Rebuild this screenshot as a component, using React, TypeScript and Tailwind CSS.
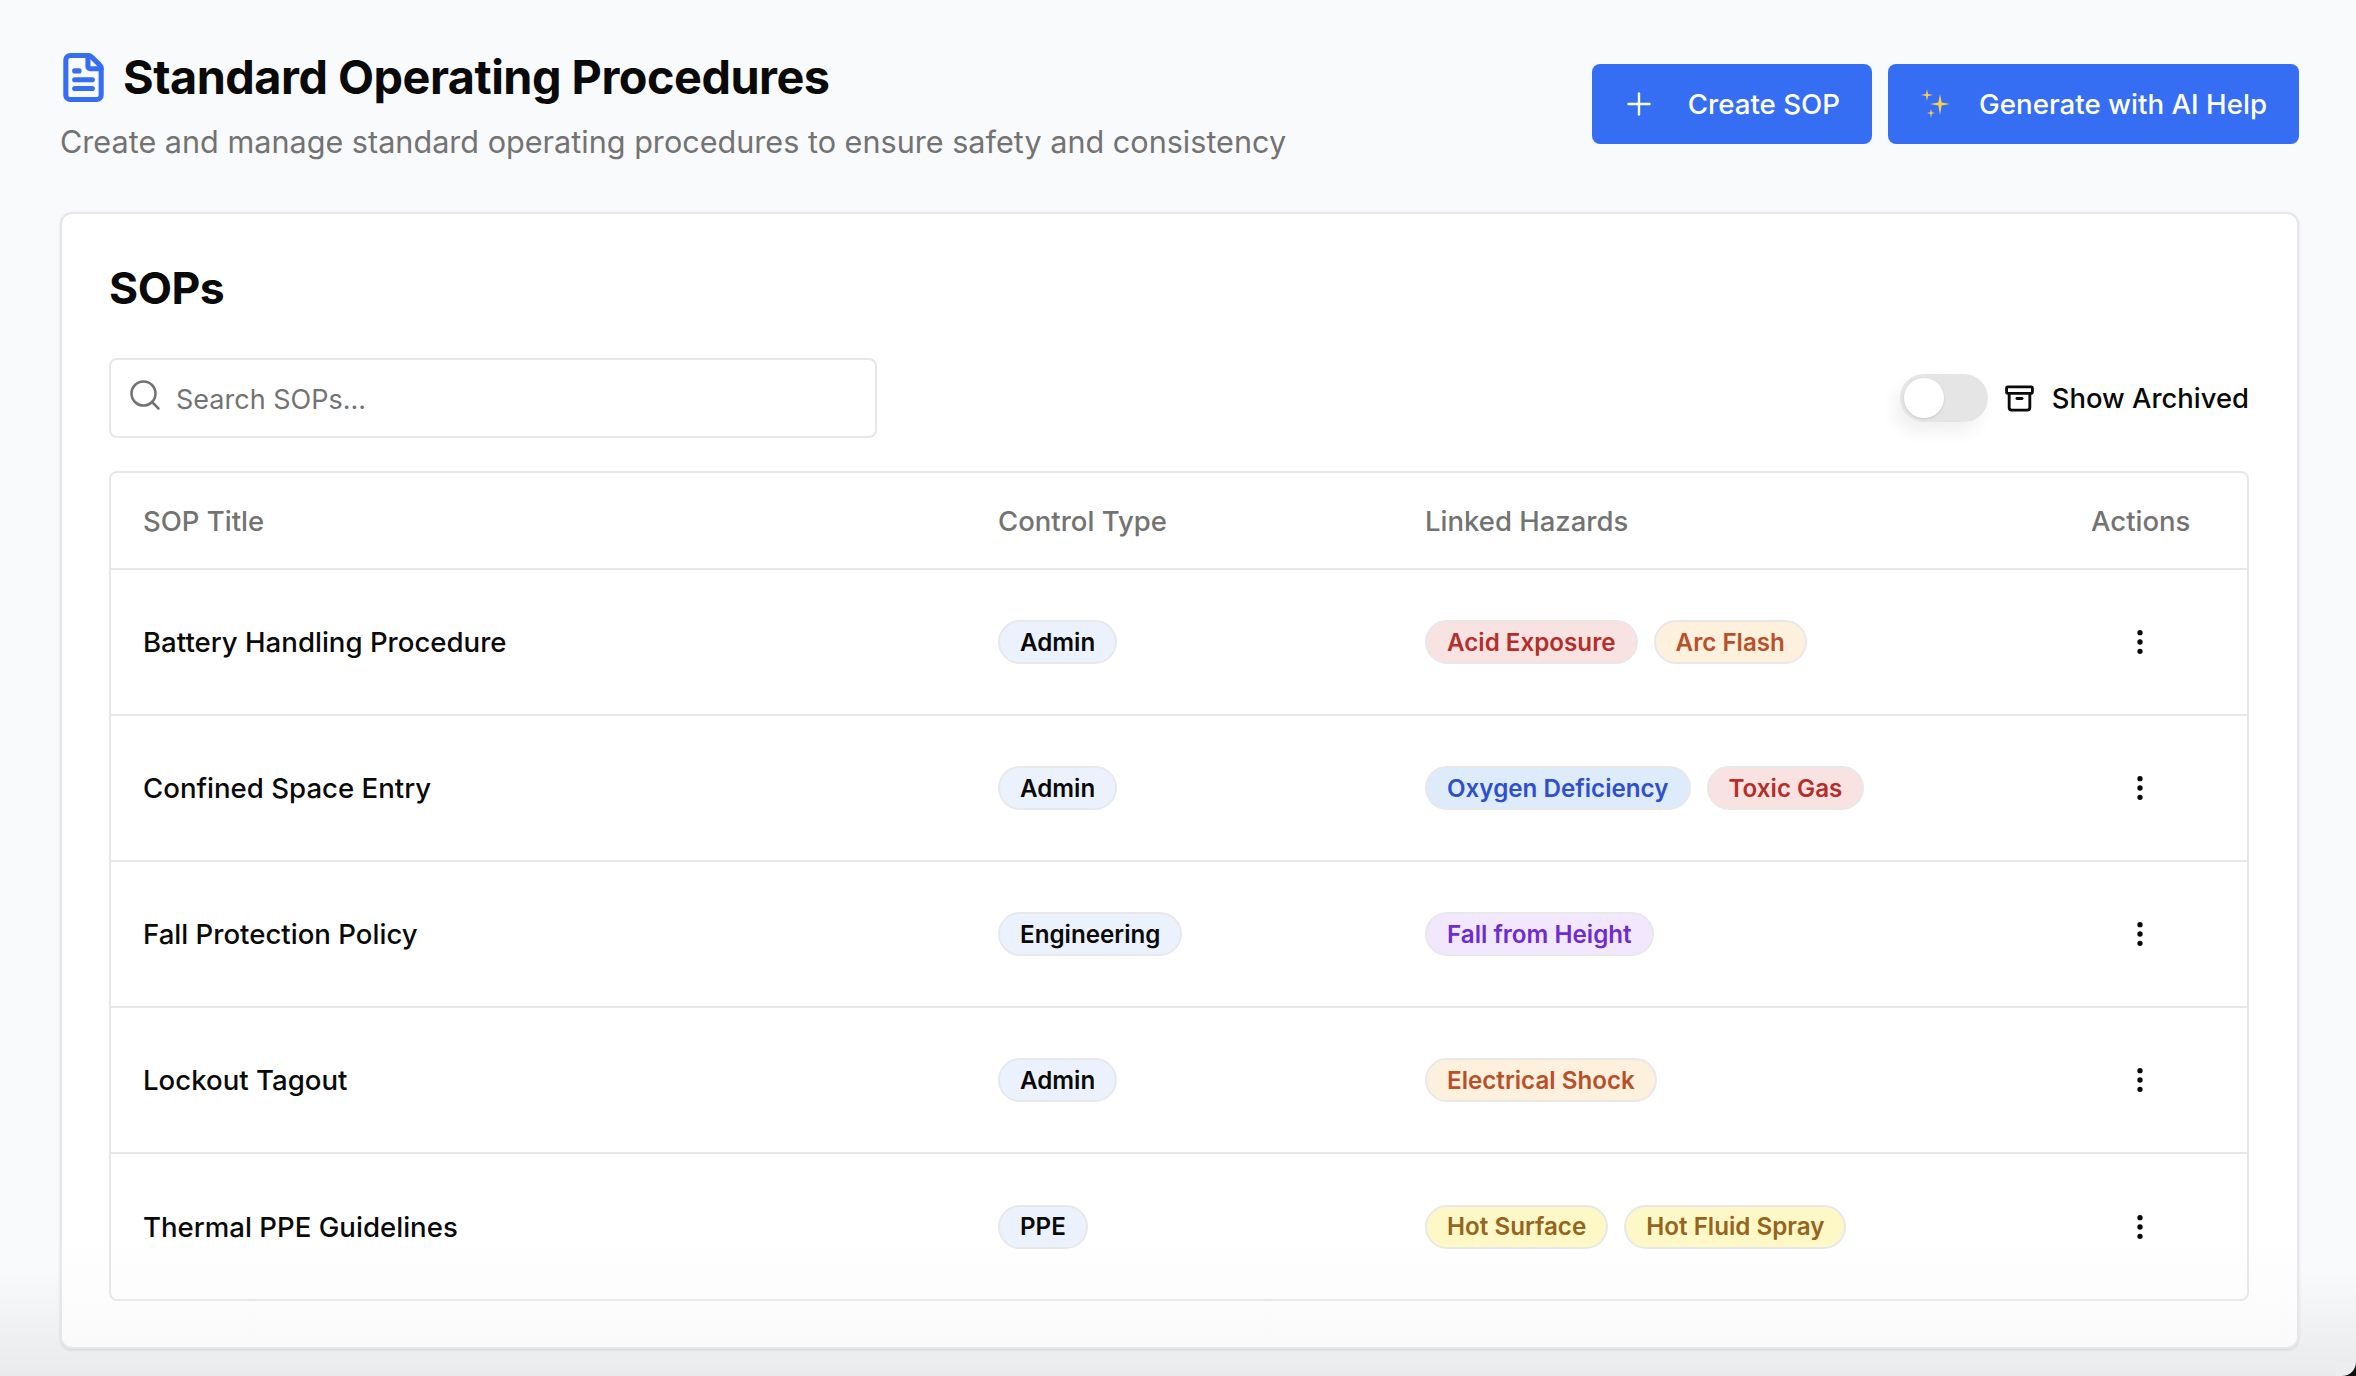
import { Archive, EllipsisVertical, FileText, Plus, Search } from 'lucide-react';

const chipStyles = {
  control: 'bg-[#ebf1fd] text-[#0a0a0a]',
  red: 'bg-[#f9e3e2] text-[#b42f2b]',
  orange: 'bg-[#fdf0dd] text-[#b8502a]',
  blue: 'bg-[#deebfb] text-[#2f50cc]',
  purple: 'bg-[#f1e8fe] text-[#6f2bd2]',
  yellow: 'bg-[#fdf8c6] text-[#946420]',
};

type Hazard = { name: string; tone: keyof typeof chipStyles };

const sops: { title: string; control: string; hazards: Hazard[] }[] = [
  {
    title: 'Battery Handling Procedure',
    control: 'Admin',
    hazards: [
      { name: 'Acid Exposure', tone: 'red' },
      { name: 'Arc Flash', tone: 'orange' },
    ],
  },
  {
    title: 'Confined Space Entry',
    control: 'Admin',
    hazards: [
      { name: 'Oxygen Deficiency', tone: 'blue' },
      { name: 'Toxic Gas', tone: 'red' },
    ],
  },
  {
    title: 'Fall Protection Policy',
    control: 'Engineering',
    hazards: [{ name: 'Fall from Height', tone: 'purple' }],
  },
  {
    title: 'Lockout Tagout',
    control: 'Admin',
    hazards: [{ name: 'Electrical Shock', tone: 'orange' }],
  },
  {
    title: 'Thermal PPE Guidelines',
    control: 'PPE',
    hazards: [
      { name: 'Hot Surface', tone: 'yellow' },
      { name: 'Hot Fluid Spray', tone: 'yellow' },
    ],
  },
];

function Chip({ label, tone }: { label: string; tone: keyof typeof chipStyles }) {
  return (
    <span
      className={`inline-flex h-[44px] items-center rounded-full border-2 border-[#e8e8ea] px-[20px] pt-[2px] text-[24.2px] font-semibold ${chipStyles[tone]}`}
    >
      {label}
    </span>
  );
}

function Sparkles() {
  return (
    <svg viewBox="0 0 34 34" className="h-[34px] w-[34px] shrink-0" fill="#fbd24e">
      <path d="M21 7 L22.6 15.4 L31 17 L22.6 18.6 L21 28 L19.4 18.6 L11 17 L19.4 15.4 Z" />
      <path d="M8 2 L9 7 L14 8 L9 9 L8 14 L7 9 L2 8 L7 7 Z" />
      <path d="M12 22 L12.8 25.2 L16 26 L12.8 26.8 L12 31 L11.2 26.8 L8 26 L11.2 25.2 Z" />
    </svg>
  );
}

export default function App() {
  return (
    <div
      className="relative h-[1376px] overflow-hidden bg-[#f9fafc] text-[#0a0a0a]"
      style={{ fontFamily: 'Inter, "Liberation Sans", sans-serif' }}
    >
      {/* Bottom fade and window corner */}
      <div className="pointer-events-none absolute inset-x-0 bottom-0 h-[110px] bg-gradient-to-b from-transparent to-[#e9eaec]" />
      <div className="absolute right-0 bottom-0 h-[14px] w-[20px] bg-[#111111]">
        <div className="h-full w-full rounded-br-[18px] bg-[#eceef0]" />
      </div>

      {/* Header */}
      <header className="relative flex h-[212px] items-start justify-between pl-[60px] pr-[57px]">
        <div className="pt-[48px]">
          <div className="flex h-[58px] items-center gap-[13px]">
            <FileText size={53} strokeWidth={2.3} className="-ml-[3px] text-[#356ef3]" />
            <h1 className="text-[46.8px] font-bold tracking-[-0.5px]">Standard Operating Procedures</h1>
          </div>
          <p className="mt-[16px] text-[30.6px] leading-[40px] text-[#737373]">
            Create and manage standard operating procedures to ensure safety and consistency
          </p>
        </div>
        <div className="mt-[64px] flex gap-[16px]">
          <button className="flex h-[80px] items-center gap-[31px] rounded-[8px] bg-[#356ef3] pl-[29px] pr-[32px] text-[27.7px] font-medium text-white">
            <Plus size={36} strokeWidth={1.6} />
            <span className="pt-[2px]">Create SOP</span>
          </button>
          <button className="flex h-[80px] items-center gap-[26px] rounded-[8px] bg-[#356ef3] pl-[31px] pr-[32px] text-[27.7px] font-medium text-white">
            <Sparkles />
            <span className="pt-[2px]">Generate with AI Help</span>
          </button>
        </div>
      </header>

      {/* SOP card */}
      <section className="relative mr-[57px] ml-[60px] h-[1137px] rounded-[12px] border-2 border-[#e7e7e9] bg-gradient-to-b from-white from-90% to-[#fafafa] pt-[46px] pr-[48px] pl-[47px] shadow-sm">
        <h2 className="text-[44.5px] leading-[56px] font-bold tracking-[-0.5px]">SOPs</h2>

        <div className="mt-[42px] flex h-[80px] items-center justify-between">
          <div className="relative w-[768px]">
            <Search size={36} strokeWidth={1.7} className="absolute top-[19px] left-[18px] text-[#737373]" />
            <input
              readOnly
              placeholder="Search SOPs..."
              className="h-[80px] w-full rounded-[8px] border-2 border-[#e7e7e9] bg-white pt-[2px] pl-[65px] text-[27px] outline-none placeholder:text-[#737373]"
            />
          </div>
          <div className="flex items-center">
            <div className="flex h-[48px] w-[88px] items-center rounded-full bg-[#e5e5e5] px-[4px] shadow-[-6px_10px_16px_rgba(0,0,0,0.06)]">
              <span className="h-[40px] w-[40px] rounded-full bg-white shadow-sm" />
            </div>
            <Archive size={31} strokeWidth={2.2} className="ml-[16px]" />
            <span className="ml-[17px] pt-[2px] text-[27.4px] font-medium">Show Archived</span>
          </div>
        </div>

        {/* Table */}
        <div className="mt-[33px] rounded-[8px] border-2 border-[#e7e7e9]">
          <div className="grid h-[95px] grid-cols-[854px_427px_667px_1fr] items-center pt-[2px] text-[27.5px] font-medium text-[#737373]">
            <div className="pl-[32px]">SOP Title</div>
            <div className="pl-[33px]">Control Type</div>
            <div className="pl-[33px]">Linked Hazards</div>
            <div className="pl-[32px]">Actions</div>
          </div>
          {sops.map((sop) => (
            <div
              key={sop.title}
              className="grid h-[146px] grid-cols-[854px_427px_667px_1fr] items-center border-t-2 border-[#e7e7e9] last:h-[147px]"
            >
              <div className="pt-[2px] pl-[32px] text-[27.6px] font-[450]">{sop.title}</div>
              <div className="pl-[33px]">
                <Chip label={sop.control} tone="control" />
              </div>
              <div className="flex gap-[16px] pl-[33px]">
                {sop.hazards.map((hazard) => (
                  <Chip key={hazard.name} label={hazard.name} tone={hazard.tone} />
                ))}
              </div>
              <div className="flex w-[129px] justify-center pl-[33px]">
                <EllipsisVertical size={32} strokeWidth={2} />
              </div>
            </div>
          ))}
        </div>
      </section>
    </div>
  );
}
